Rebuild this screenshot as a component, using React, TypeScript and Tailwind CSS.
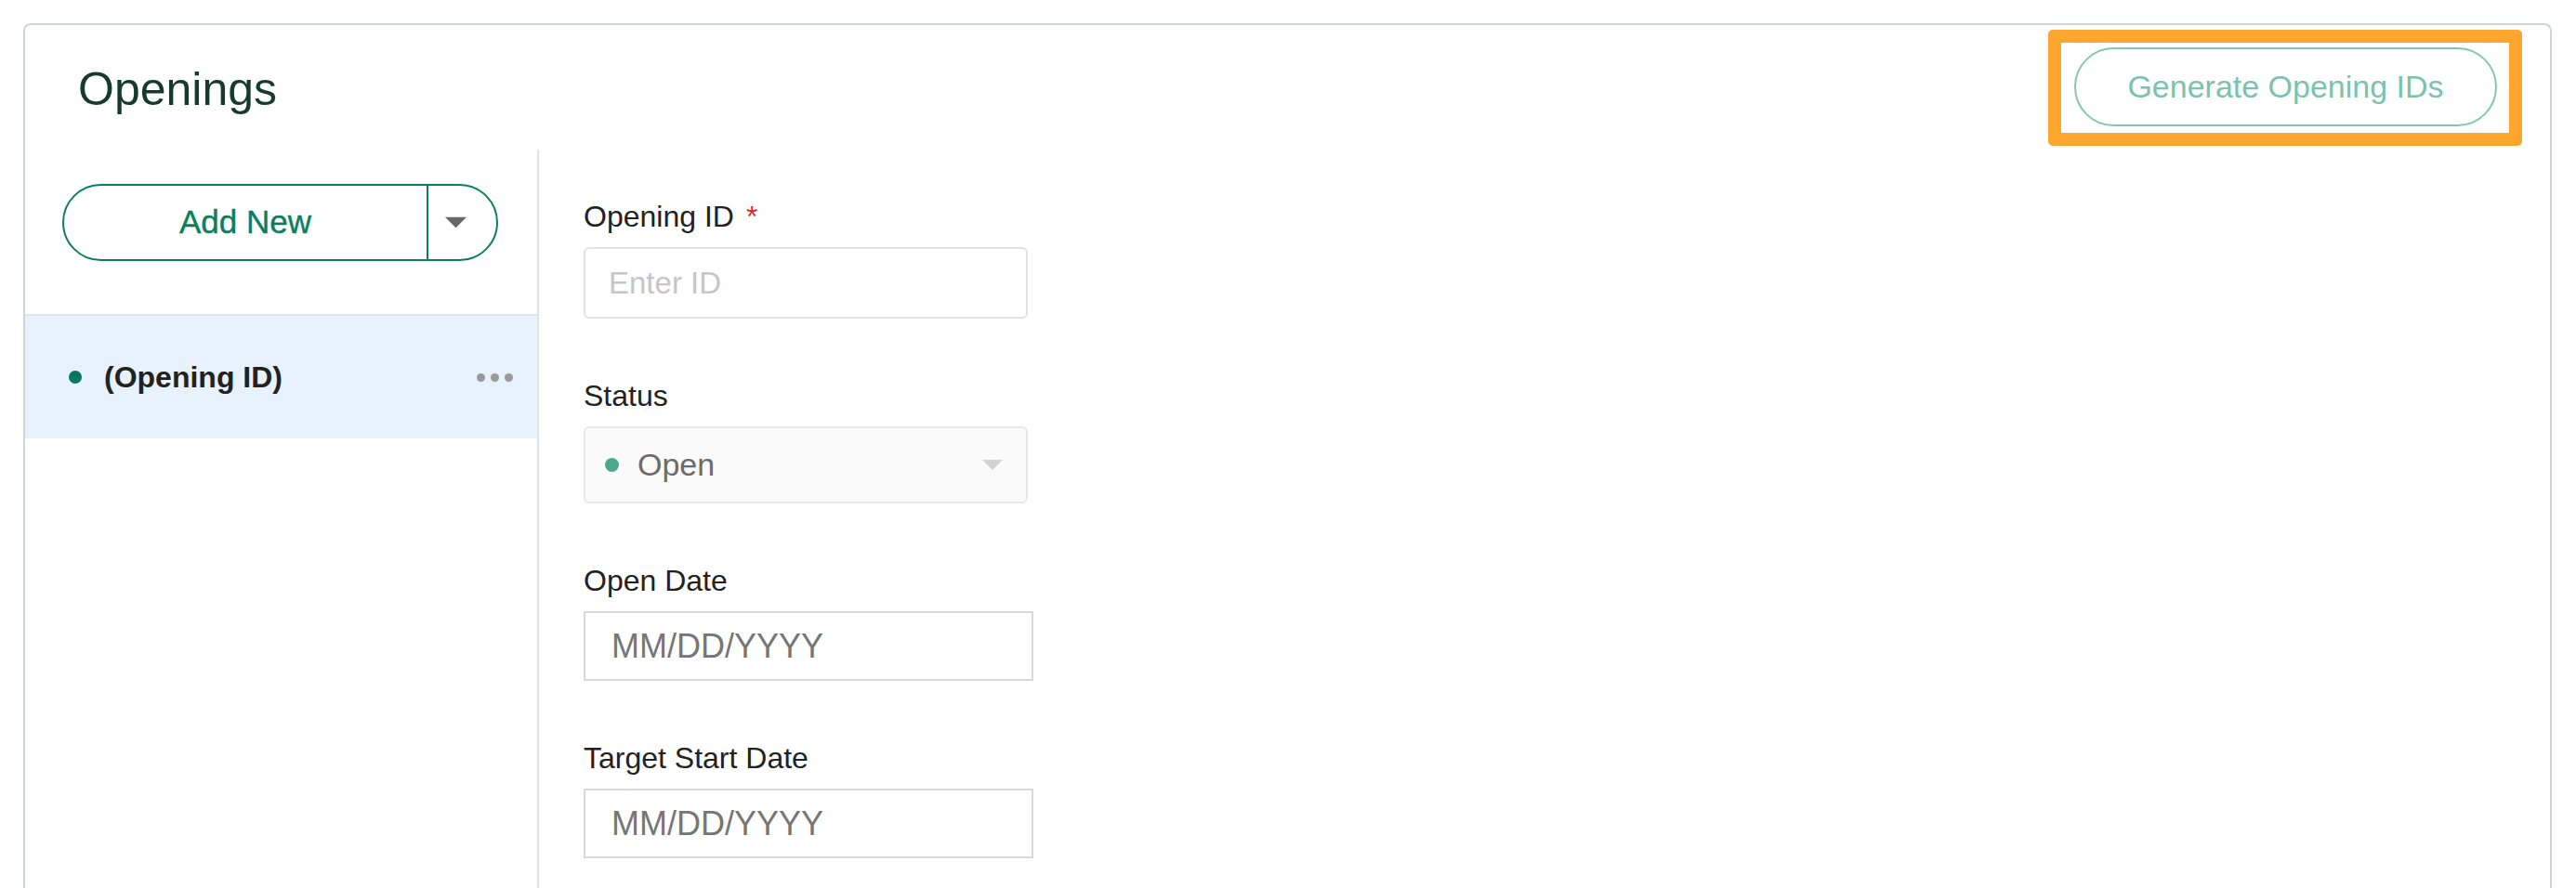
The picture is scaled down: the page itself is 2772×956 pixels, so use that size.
import { useState } from 'react';

type Field = {
  label: string;
  placeholder: string;
};

const dateFields: Field[] = [
  { label: 'Open Date', placeholder: 'MM/DD/YYYY' },
  { label: 'Target Start Date', placeholder: 'MM/DD/YYYY' },
];

const Caret = ({ className }: { className: string }) => (
  <svg viewBox="0 0 24 12" className={className} aria-hidden="true">
    <path d="M0 0 L24 0 L12 12 Z" fill="currentColor" />
  </svg>
);

export default function App() {
  const [openingId, setOpeningId] = useState('');

  return (
    <div className="min-h-screen bg-white font-['Liberation_Sans',Arial,sans-serif] pt-[25px] pl-[25px] pr-[26px]">
      <div className="rounded-t-[8px] border-2 border-b-0 border-[#cfd6d4] bg-white">
        {/* header */}
        <div className="flex h-[134px] items-start justify-between pl-[57px] pr-[30px]">
          <h1 className="mt-[41px] text-[50px] leading-[56px] font-normal text-[#163a2d]">Openings</h1>

          <div className="mt-[5px] rounded-[5px] border-[14px] border-[#ffa62f] pt-[5px] pb-[7px] pl-[14px] pr-[13px]">
            <button className="flex h-[85px] w-[455px] items-center justify-center rounded-full border-2 border-[#84c6b2] text-[34px] text-[#7cc2ad]">
              Generate Opening IDs
            </button>
          </div>
        </div>

        {/* body */}
        <div className="flex h-[840px]">
          <aside className="w-[553px] shrink-0 border-r-2 border-[#e2e2e2]">
            <div className="px-[40px] pt-[37px]">
              <div className="flex h-[83px] w-[469px] rounded-full border-2 border-[#0a7f5e]">
                <button className="flex flex-1 items-center justify-center text-[35px] text-[#0a7f5e] [-webkit-text-stroke:0.4px_#0a7f5e]">
                  Add New
                </button>
                <button className="flex w-[75px] items-center border-l-2 border-[#0a7f5e] pl-[18px]">
                  <Caret className="h-[13px] w-[23px] text-[#666666]" />
                </button>
              </div>
            </div>

            <div className="mt-[57px] border-t-2 border-[#dde3e8]" />
            <div className="flex h-[132px] items-center bg-[#e8f2fd] pl-[47px] pr-[26px]">
              <span className="h-[14px] w-[14px] rounded-full bg-[#047a5a]" />
              <span className="ml-[24px] text-[32px] font-bold text-[#222222]">(Opening ID)</span>
              <span className="ml-auto flex gap-[6px]">
                <span className="h-[9px] w-[9px] rounded-full bg-[#9a9a9a]" />
                <span className="h-[9px] w-[9px] rounded-full bg-[#9a9a9a]" />
                <span className="h-[9px] w-[9px] rounded-full bg-[#9a9a9a]" />
              </span>
            </div>
          </aside>

          <div className="flex flex-col pl-[48px] pt-[52px]">
            <label className="mb-[13px] text-[32px] leading-[40px] text-[#222222]">
              Opening ID<span className="ml-[13px] text-[#d92a2a]">*</span>
            </label>
            <input
              value={openingId}
              onChange={(e) => setOpeningId(e.target.value)}
              placeholder="Enter ID"
              className="h-[77px] w-[478px] rounded-[6px] border-2 border-[#e2e2e2] pl-[25px] text-[33px] outline-none placeholder:text-[#c6c6c6]"
            />

            <label className="mt-[63px] mb-[13px] text-[32px] leading-[40px] text-[#222222]">Status</label>
            <button className="flex h-[83px] w-[478px] items-center rounded-[6px] border-2 border-[#e8e8e8] bg-[#fafafa] pl-[21px] pr-[24px]">
              <span className="h-[15px] w-[15px] rounded-full bg-[#4aa98b]" />
              <span className="ml-[20px] text-[34px] text-[#6b6b6b]">Open</span>
              <Caret className="ml-auto h-[11px] w-[24px] text-[#d2d2d2]" />
            </button>

            {dateFields.map((field) => (
              <div key={field.label} className="flex flex-col">
                <label className="mt-[63px] mb-[13px] text-[32px] leading-[40px] text-[#222222]">{field.label}</label>
                <input
                  placeholder={field.placeholder}
                  className="h-[75px] w-[484px] border-2 border-[#d9d9d9] pl-[28px] text-[36px] outline-none placeholder:text-[#767676]"
                />
              </div>
            ))}
          </div>
        </div>
      </div>
    </div>
  );
}
